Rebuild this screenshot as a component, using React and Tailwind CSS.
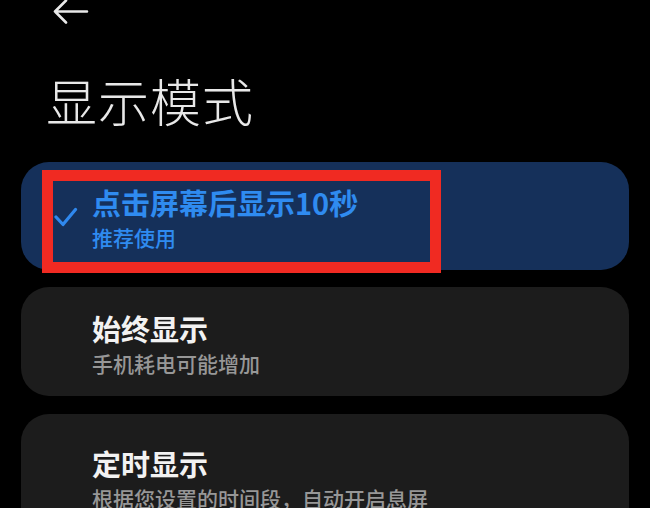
export default function App() {
  const font = { fontFamily: '"Noto Sans CJK SC", "Noto Sans", sans-serif' };
  return (
    <div
      className="relative w-[650px] h-[508px] overflow-hidden bg-black"
      style={font}
    >
      <div className="pl-[53px] h-[24px] -mt-[1px]">
        <svg width="36" height="26" viewBox="0 0 36 26" fill="none">
          <path
            d="M34 12.5 H2 M13 1.5 L2 12.5 L13 23.5"
            stroke="#e8e8e8"
            strokeWidth="2.6"
            strokeLinecap="round"
            strokeLinejoin="round"
          />
        </svg>
      </div>
      <div className="mt-[52px] pl-[46px] text-[51px] leading-[50px] font-light text-[#e8e8e8] tracking-[1px]">
        显示模式
      </div>
      <div className="mt-[37px] flex flex-col gap-[17px] px-[21px]">
        <div className="h-[108px] rounded-[28px] bg-[#15305a] pl-[71px] pt-[25px] relative">
          <svg
            className="absolute left-[33px] top-[45px]"
            width="24"
            height="21"
            viewBox="0 0 24 21"
            fill="none"
          >
            <path
              d="M2 10 L9 17.5 L21.5 2.5"
              stroke="#2f88ee"
              strokeWidth="3.2"
              strokeLinecap="round"
              strokeLinejoin="round"
            />
          </svg>
          <div className="text-[29px] leading-[30px] font-semibold text-[#2f8bf0]">
            点击屏幕后显示10秒
          </div>
          <div className="mt-[8px] text-[21px] leading-[24px] font-medium text-[#2f8bf0]">
            推荐使用
          </div>
        </div>
        <div className="h-[109px] rounded-[28px] bg-[#1c1c1c] pl-[71px] pt-[26px]">
          <div className="text-[29px] leading-[30px] font-semibold text-[#f2f2f2]">
            始终显示
          </div>
          <div className="mt-[8px] text-[21px] leading-[24px] font-medium text-[#979797]">
            手机耗电可能增加
          </div>
        </div>
        <div className="mt-[1px] h-[130px] rounded-[28px] bg-[#1c1c1c] pl-[71px] pt-[34px]">
          <div className="text-[29px] leading-[30px] font-semibold text-[#f2f2f2]">
            定时显示
          </div>
          <div className="mt-[8px] text-[21px] leading-[24px] font-medium text-[#979797]">
            根据您设置的时间段，自动开启息屏
          </div>
        </div>
      </div>
      <div className="absolute left-[42px] top-[170px] w-[399px] h-[103px] border-[11px] border-[#f02a22]" />
    </div>
  );
}
